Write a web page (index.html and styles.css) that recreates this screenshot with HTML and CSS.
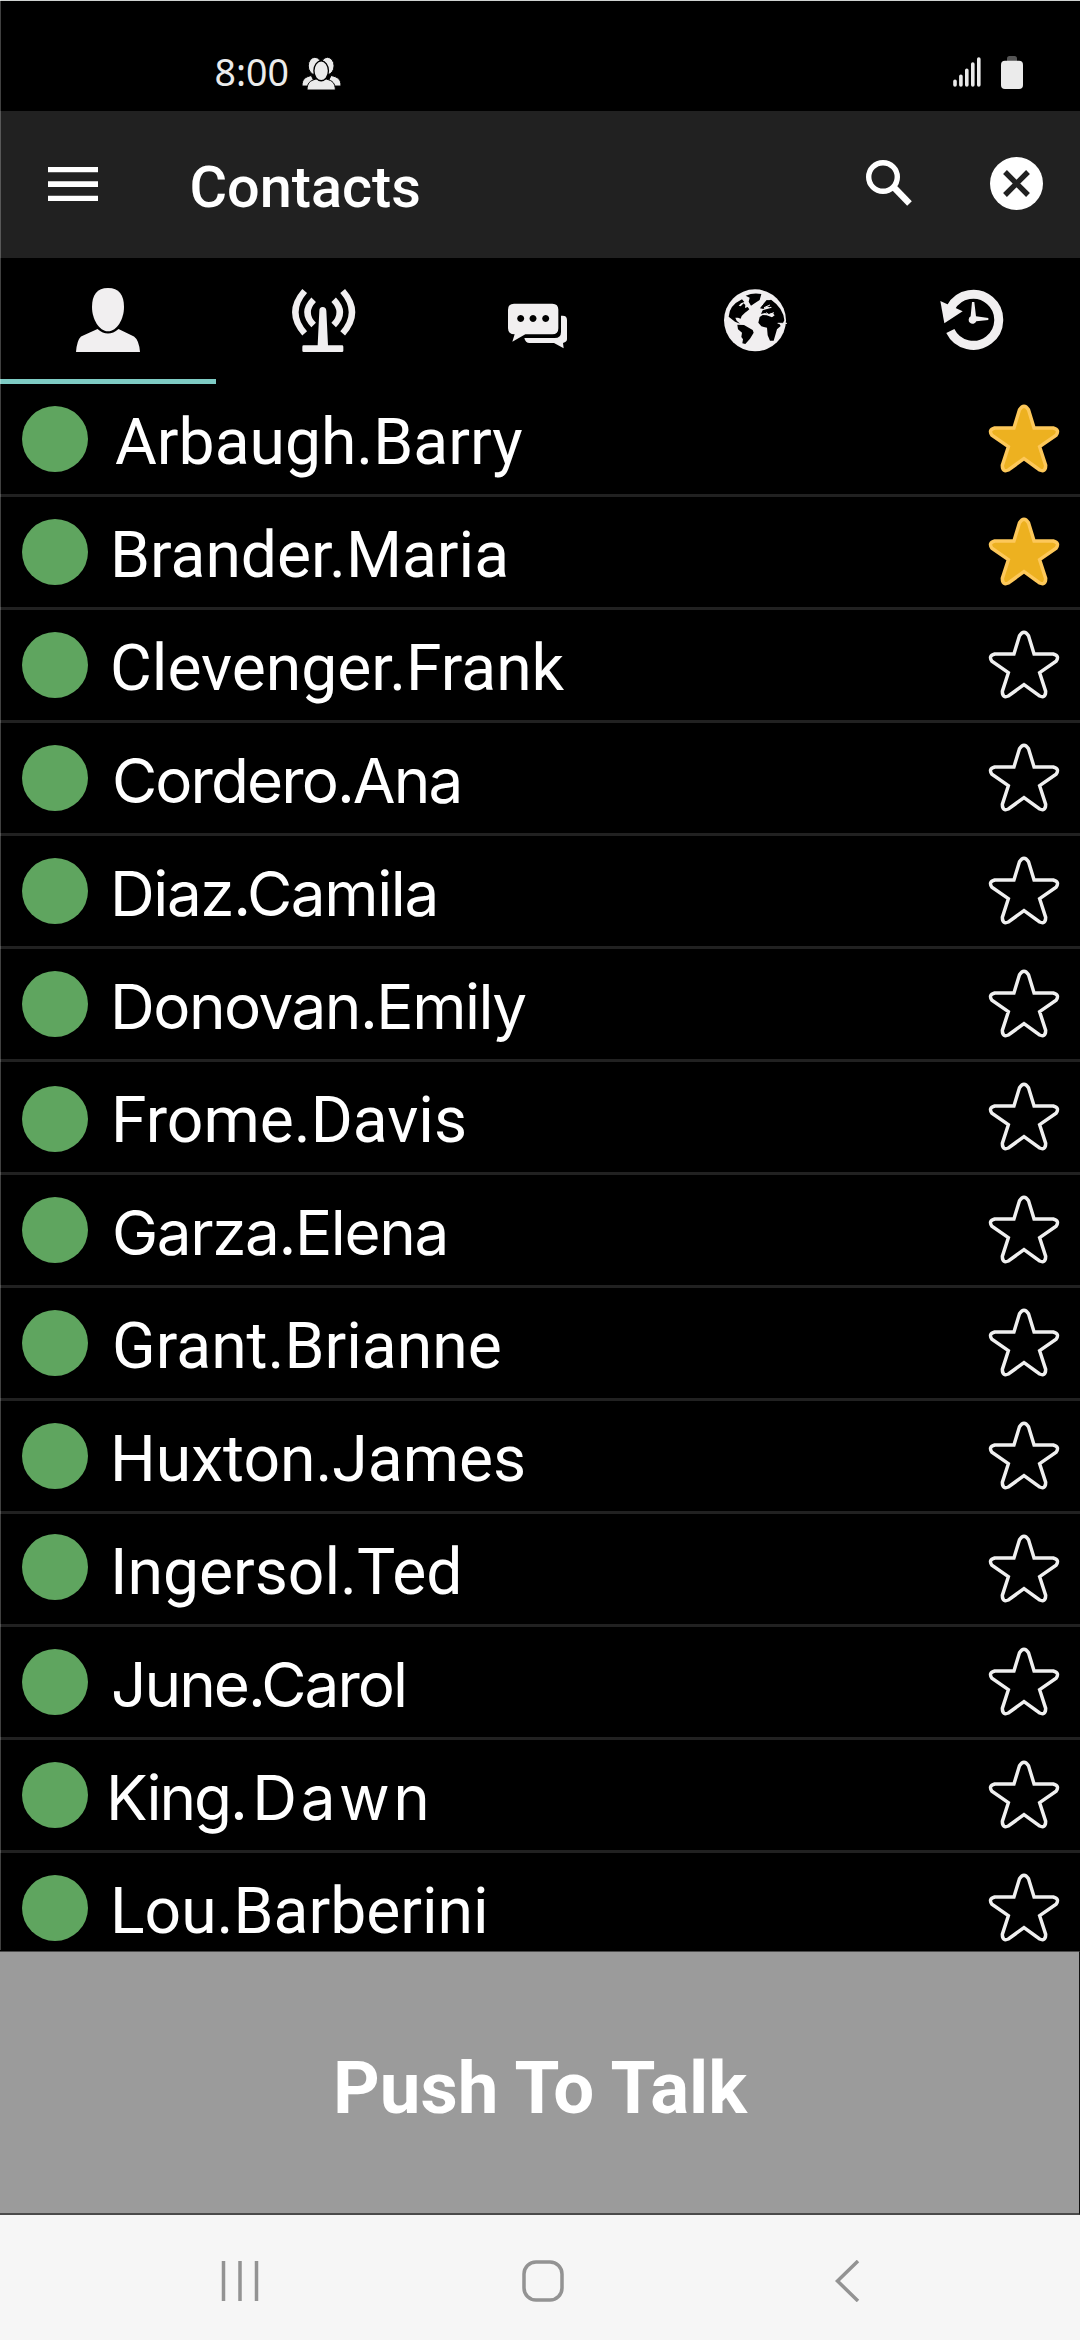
FILE: index.html
```
<!DOCTYPE html>
<html lang="en">

<head>
    <meta charset="UTF-8">
    <meta name="viewport" content="width=device-width, initial-scale=1.0">
    <title>Contacts</title>
    <link rel="stylesheet" href="styles.css">
</head>

<body>
    <!-- shared star shape -->
    <svg class="defs" width="0" height="0">
        <symbol id="star" viewBox="-1.5 -1 75 73">
            <path d="M31.3 5 Q36 -2.2 40.7 5 L46.5 24 L66.5 24 Q73.5 26 69.5 31.5 L52.3 43.5 L58.6 63 Q58.5 70.5 52.3 67.8 L36 56 L19.7 67.8 Q13.5 70.5 13.4 63 L19.7 43.5 L2.5 31.5 Q-1.5 26 5.5 24 L25.5 24 Z" />
        </symbol>
    </svg>

    <div class="status">
        <span class="time">8:00</span>
        <svg class="people" viewBox="34 34 118 98">
            <g fill="#ebebeb" stroke="#000" stroke-width="3">
                <path d="M34 121 C34 100 43 94 62 89 L78 121 Z" />
                <path d="M152 121 C152 100 143 94 122 89 L106 121 Z" />
                <ellipse cx="73" cy="60" rx="20" ry="26" />
                <ellipse cx="111" cy="60" rx="20" ry="26" />
                <path d="M49 133 C50 112 57 105 76 100 H108 C127 105 134 112 135 133 Z" />
                <ellipse cx="92" cy="75" rx="22" ry="30" stroke-width="4" />
            </g>
        </svg>
        <svg class="signal" viewBox="0 0 28 30" fill="none" stroke="#ebebeb" stroke-width="3.6" stroke-linecap="round">
            <path d="M2 24.3V28M7.9 19.3V28M13.8 13.3V28M19.8 7V28M25.8 2V28" />
        </svg>
        <svg class="battery" viewBox="0 0 22 33">
            <path fill="#555" d="M6 6V2.5Q6 0 8.5 0H13.5Q16 0 16 2.5V6Z" />
            <rect x="0" y="4.7" width="22" height="28.3" rx="4" fill="#ebebeb" />
        </svg>
    </div>

    <div class="header">
        <svg class="menu" viewBox="0 0 50 34" fill="#fff">
            <path d="M0 0H50V5.3H0ZM0 14.3H50V20H0ZM0 28.7H50V34H0Z" />
        </svg>
        <h1>Contacts</h1>
        <svg class="search" viewBox="0 0 46 46" fill="none" stroke="#fff">
            <circle cx="17" cy="17" r="14.3" stroke-width="5.4" />
            <path d="M28.5 28L43.5 43.5" stroke-width="6.5" />
        </svg>
        <svg class="close" viewBox="0 0 53 53">
            <circle cx="26.5" cy="26.5" r="26.5" fill="#fff" />
            <path d="M15 15L38 38M38 15L15 38" stroke="#212121" stroke-width="5.4" />
        </svg>
    </div>

    <div class="tabs">
        <div class="tab active">
            <svg viewBox="0 0 64 64">
                <path d="M32 0C43 0 48 7 48 19C48 31 41 43.3 32 43.3S16 31 16 19C16 7 21 0 32 0Z" />
                <path d="M21.5 41Q32 50 42.5 41L58 48.5Q63 52 64 64H0Q1 52 5 48.5Z" />
            </svg>
        </div>
        <div class="tab">
            <svg viewBox="6 24 192 192">
                <path d="M88 92Q88 81 98 81T109 92L114 196H156Q160 196 160 200V212Q160 216 156 216H41Q37 216 37 212V200Q37 196 41 196H83Z" />
                <g fill="none" stroke="#f1eff0">
                    <path d="M44 33Q-12 97 44 160" stroke-width="19" />
                    <path d="M158 33Q214 97 158 160" stroke-width="19" />
                    <path d="M71 59Q34 97 71 135" stroke-width="19" />
                    <path d="M131 59Q168 97 131 135" stroke-width="19" />
                </g>
            </svg>
        </div>
        <div class="tab">
            <svg viewBox="654 24 192 192">
                <path fill-rule="evenodd" d="M672 71H787Q805 71 805 89V145Q805 163 787 163H706L667 185L674 163Q654 163 654 145V89Q654 71 672 71ZM692 105A10.5 10.5 0 1 0 692.1 105ZM729 105A10.5 10.5 0 1 0 729.1 105ZM767 105A10.5 10.5 0 1 0 767.1 105Z" />
                <path d="M813 107H818Q831 107 831 120V178Q831 186 819 189L821 205L792 189H719Q706 189 703 174H794Q813 174 813 156Z" />
            </svg>
        </div>
        <div class="tab">
            <svg viewBox="27 24 192 192">
                <circle cx="120" cy="121" r="93" />
                <g fill="#000">
                    <path d="M92 47Q114 37 139 42L134 60L119 70L108 77L101 65L104 53Z" />
                    <path d="M81 58L88 66L78 70L71 77L77 79L86 70L91 75L90 84L98 81L103 88L97 93L90 98L80 108L77 116L69 113L61 113L65 122L75 131L60 125L41 110Q43 76 81 58Z" />
                    <path d="M67 134L87 135L113 150L116 158L105 176L91 192L82 190L84 178L79 171L81 158L69 148Z" />
                    <path d="M143 74L155 60L171 62L186 77L176 77L164 82L155 79L145 87L135 85Z" />
                    <path d="M158 62L168 59Q205 84 208 121L203 131L191 128L197 138L186 148L176 182L165 182L158 166L156 143L139 139L130 128L134 111L143 105L155 106L171 112L179 106L172 98L160 103L150 99L138 102L143 91L159 86L170 83Z" />
                </g>
                <path d="M134 82L144 72M147 83L165 75M153 98L162 104L177 98M188 130H216" fill="none" stroke="#f1eff0" stroke-width="3" />
            </svg>
        </div>
        <div class="tab">
            <svg viewBox="675 24 192 192">
                <path d="M706 153A76.5 76.5 0 1 0 708 82" fill="none" stroke="#f1eff0" stroke-width="27" />
                <path d="M676 63L743 94L688 130Z" />
                <path d="M771 66H778L783 109L820 114V120L784 124A12 12 0 1 1 767 109Z" />
            </svg>
        </div>
    </div>

    <div class="contacts">
        <div class="row">
            <span class="dot"></span>
            <span class="name n1">Arbaugh.Barry</span>
            <svg class="star fav"><use href="#star" /></svg>
        </div>
        <div class="row">
            <span class="dot"></span>
            <span class="name">Brander.Maria</span>
            <svg class="star fav"><use href="#star" /></svg>
        </div>
        <div class="row">
            <span class="dot"></span>
            <span class="name">Clevenger.Frank</span>
            <svg class="star"><use href="#star" /></svg>
        </div>
        <div class="row">
            <span class="dot"></span>
            <span class="name alt n4">Cordero.Ana</span>
            <svg class="star"><use href="#star" /></svg>
        </div>
        <div class="row">
            <span class="dot"></span>
            <span class="name alt">Diaz.Camila</span>
            <svg class="star"><use href="#star" /></svg>
        </div>
        <div class="row">
            <span class="dot"></span>
            <span class="name alt n6">Donovan.Emily</span>
            <svg class="star"><use href="#star" /></svg>
        </div>
        <div class="row">
            <span class="dot low"></span>
            <span class="name n7">Frome.Davis</span>
            <svg class="star"><use href="#star" /></svg>
        </div>
        <div class="row">
            <span class="dot"></span>
            <span class="name alt n8">Garza.Elena</span>
            <svg class="star"><use href="#star" /></svg>
        </div>
        <div class="row">
            <span class="dot"></span>
            <span class="name n9">Grant.Brianne</span>
            <svg class="star"><use href="#star" /></svg>
        </div>
        <div class="row">
            <span class="dot"></span>
            <span class="name">Huxton.James</span>
            <svg class="star"><use href="#star" /></svg>
        </div>
        <div class="row">
            <span class="dot high"></span>
            <span class="name">Ingersol.Ted</span>
            <svg class="star"><use href="#star" /></svg>
        </div>
        <div class="row">
            <span class="dot"></span>
            <span class="name alt n12">June.Carol</span>
            <svg class="star"><use href="#star" /></svg>
        </div>
        <div class="row">
            <span class="dot"></span>
            <span class="name alt n13">King.<span class="spaced">Dawn</span></span>
            <svg class="star"><use href="#star" /></svg>
        </div>
        <div class="row">
            <span class="dot"></span>
            <span class="name">Lou.Barberini</span>
            <svg class="star"><use href="#star" /></svg>
        </div>
    </div>

    <button class="ptt" type="button">Push To Talk</button>

    <div class="nav">
        <svg viewBox="0 0 42 42">
            <path d="M4.5 1V41M21 1V41M37.5 1V41" />
        </svg>
        <svg viewBox="0 0 42 42">
            <rect x="2" y="2" width="38" height="38" rx="12" />
        </svg>
        <svg viewBox="0 0 42 42">
            <path d="M33 1L12.5 21L33 41" />
        </svg>
    </div>
</body>

</html>
```
FILE: styles.css
```
* {
    box-sizing: border-box;
}

body {
    margin: 0;
    width: 1080px;
    height: 2340px;
    background-color: #000;
    color: #fff;
    font-family: Roboto, sans-serif;
    display: flex;
    flex-direction: column;
    overflow: hidden;
    position: relative;
}

/* thin line down the left edge of the screen */
body::before {
    content: "";
    position: absolute;
    left: 0;
    top: 0;
    width: 1px;
    height: 1950px;
    background-color: rgba(255, 255, 255, 0.25);
}

svg {
    display: block;
    flex: none;
}

.defs {
    position: absolute;
}

.status {
    height: 111px;
    border-top: 1px solid #cfd2d1;
    padding: 55px 57.5px 0 214.6px;
    display: flex;
    align-items: flex-start;
}

.time {
    font-family: "Noto Sans", sans-serif;
    font-size: 37.5px;
    line-height: 32px;
    color: #ebebeb;
    width: 87px;
}

.people {
    width: 39px;
    height: 33px;
    margin-top: 1px;
}

.signal {
    width: 28px;
    height: 30px;
    margin: 1px 19.5px 0 auto;
}

.battery {
    width: 22px;
    height: 33px;
}

.header {
    height: 147px;
    background-color: #212121;
    padding: 0 37px 0 48px;
    display: flex;
    align-items: center;
}

.menu {
    width: 50px;
    height: 34px;
    margin-bottom: 1px;
}

h1 {
    margin: 5px auto 0 91.5px;
    font-size: 57.6px;
    font-weight: 500;
}

.search {
    width: 46px;
    height: 46px;
    margin: 0 78px 3px 0;
}

.close {
    width: 53px;
    height: 53px;
    margin-bottom: 2px;
}

.tabs {
    display: grid;
    grid-template-columns: repeat(5, 1fr);
    height: 126px;
}

.tab {
    display: flex;
    justify-content: center;
    padding-top: 30px;
    border-bottom: 5px solid transparent;
}

.tab svg {
    width: 64px;
    height: 64px;
    fill: #f1eff0;
}

.active {
    border-color: #7ecbc4;
}

.contacts {
    height: 1567px;
    overflow: hidden;
}

.row {
    height: 113px;
    border-bottom: 3px solid #212121;
    padding: 0 20px 0 22px;
    display: flex;
    align-items: center;
}

.row:last-child {
    border-color: transparent;
}

.dot {
    width: 66px;
    height: 66px;
    border-radius: 50%;
    background-color: #5fa55f;
}

.low {
    margin-top: 4px;
}

.high {
    margin-bottom: 4px;
}

.name {
    margin: 6px auto 0 22px;
    font-size: 64.2px;
    line-height: 74px;
    white-space: nowrap;
}

/* looser face, tightened to sit with the others */
.alt {
    font-family: Inter, sans-serif;
    font-size: 62px;
    letter-spacing: -1.4px;
}

.n1 {
    margin-left: 27px;
}

.n4 {
    letter-spacing: -1.92px;
    margin-left: 24px;
}

.n6 {
    letter-spacing: -1.5px;
}

.n7 {
    margin-left: 23px;
}

.n8 {
    margin-left: 24px;
}

.n9 {
    margin-left: 24px;
}

.n12 {
    letter-spacing: -1.95px;
    margin-left: 23px;
}

.n13 {
    letter-spacing: -2.07px;
    margin-left: 18px;
}

.spaced {
    letter-spacing: 3.57px;
    margin-left: 6.5px;
}

.star {
    width: 72px;
    height: 70px;
    fill: none;
    stroke: #f0f0f0;
    stroke-width: 3.6px;
    overflow: visible;
}

.fav {
    fill: #edb120;
    stroke: #fdc85a;
}

.ptt {
    height: 264px;
    padding: 11px 0 0 1px;
    border: solid #4b4b4b;
    border-width: 1px 1px 2px 0;
    border-right-color: #111;
    background-color: #9b9b9b;
    color: #fff;
    font-family: Roboto, sans-serif;
    font-size: 72.6px;
    font-weight: bold;
}

.nav {
    flex: 1;
    background-color: #f6f6f6;
    display: flex;
    justify-content: space-between;
    padding: 45px 213px 0 219px;
}

.nav svg {
    width: 42px;
    height: 42px;
    fill: none;
    stroke: #939393;
    stroke-width: 3.5px;
}
```
